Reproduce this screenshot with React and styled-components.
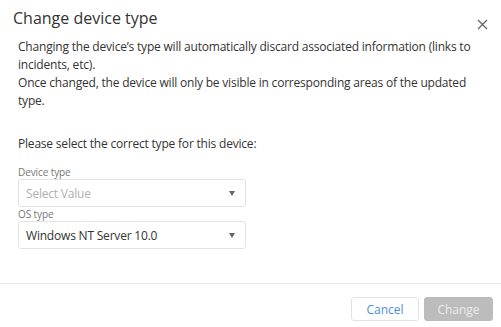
import React from "react";
import styled, { createGlobalStyle } from "styled-components";

const Global = createGlobalStyle`
  html, body { margin: 0; padding: 0; background: #fff; }
  body { font-family: "Open Sans", "Noto Sans", sans-serif; color: #333; }
`;

const Dialog = styled.div`
  width: 501px;
  height: 327px;
  display: flex;
  flex-direction: column;
  background: #fff;
  box-sizing: border-box;
`;

const Header = styled.div`
  display: flex;
  align-items: flex-start;
  justify-content: space-between;
  padding: 7px 12px 0 13px;
`;

const Title = styled.h2`
  margin: 0;
  font-size: 16px;
  font-weight: 400;
  line-height: 22px;
  color: #333;
`;

const Close = styled.button`
  border: 0;
  background: none;
  padding: 0;
  margin-top: 12px;
  width: 12px;
  height: 12px;
  display: flex;
  cursor: pointer;
`;

const Body = styled.div`
  flex: 1;
  padding: 7px 18px 0 18px;
  display: flex;
  flex-direction: column;
`;

const Text = styled.p`
  margin: 0;
  font-size: 12px;
  line-height: 18px;
  letter-spacing: -0.2px;
  color: #333;
`;

const Prompt = styled(Text)`
  margin-top: 25px;
`;

const Fields = styled.div`
  margin-top: 13px;
  display: flex;
  flex-direction: column;
  width: 228px;
`;

const Label = styled.label`
  font-size: 10px;
  line-height: 13px;
  letter-spacing: -0.1px;
  color: #777;
`;

const Select = styled.div`
  height: 28px;
  box-sizing: border-box;
  border: 1px solid #e3e3e3;
  border-radius: 3px;
  display: flex;
  align-items: center;
  justify-content: space-between;
  padding: 0 10px 0 7px;
  font-size: 12px;
  letter-spacing: -0.2px;
  color: ${(p) => (p.$placeholder ? "#b0b0b0" : "#333")};
  margin-bottom: 1px;
`;

const Arrow = styled.span`
  width: 0;
  height: 0;
  border-left: 3.5px solid transparent;
  border-right: 3.5px solid transparent;
  border-top: 5px solid #666;
  margin-top: 1px;
`;

const Footer = styled.div`
  border-top: 1px solid #eaeaea;
  height: 44px;
  display: flex;
  align-items: flex-start;
  justify-content: flex-end;
  gap: 5px;
  padding: 13px 8px 0 0;
  box-sizing: border-box;
`;

const Button = styled.button`
  height: 24px;
  box-sizing: border-box;
  border-radius: 3px;
  font-family: inherit;
  font-size: 12px;
  padding: 0;
  width: ${(p) => (p.$primary ? "69px" : "68px")};
  border: 1px solid ${(p) => (p.$primary ? "#bcbcbc" : "#e3e3e3")};
  background: ${(p) => (p.$primary ? "#bcbcbc" : "#fff")};
  color: ${(p) => (p.$primary ? "#ececec" : "#4a8fe0")};
`;

export default function App() {
  return (
    <>
      <Global />
      <Dialog>
        <Header>
          <Title>Change device type</Title>
          <Close aria-label="Close">
            <svg width="11" height="11" viewBox="0 0 11 11">
              <path d="M1 1L10 10M10 1L1 10" stroke="#666" strokeWidth="1.3" />
            </svg>
          </Close>
        </Header>
        <Body>
          <Text>
            Changing the device’s type will automatically discard associated information (links to
            incidents, etc).
          </Text>
          <Text>
            Once changed, the device will only be visible in corresponding areas of the updated
            type.
          </Text>
          <Prompt>Please select the correct type for this device:</Prompt>
          <Fields>
            <Label>Device type</Label>
            <Select $placeholder>
              Select Value
              <Arrow />
            </Select>
            <Label>OS type</Label>
            <Select>
              Windows NT Server 10.0
              <Arrow />
            </Select>
          </Fields>
        </Body>
        <Footer>
          <Button>Cancel</Button>
          <Button $primary disabled>
            Change
          </Button>
        </Footer>
      </Dialog>
    </>
  );
}
